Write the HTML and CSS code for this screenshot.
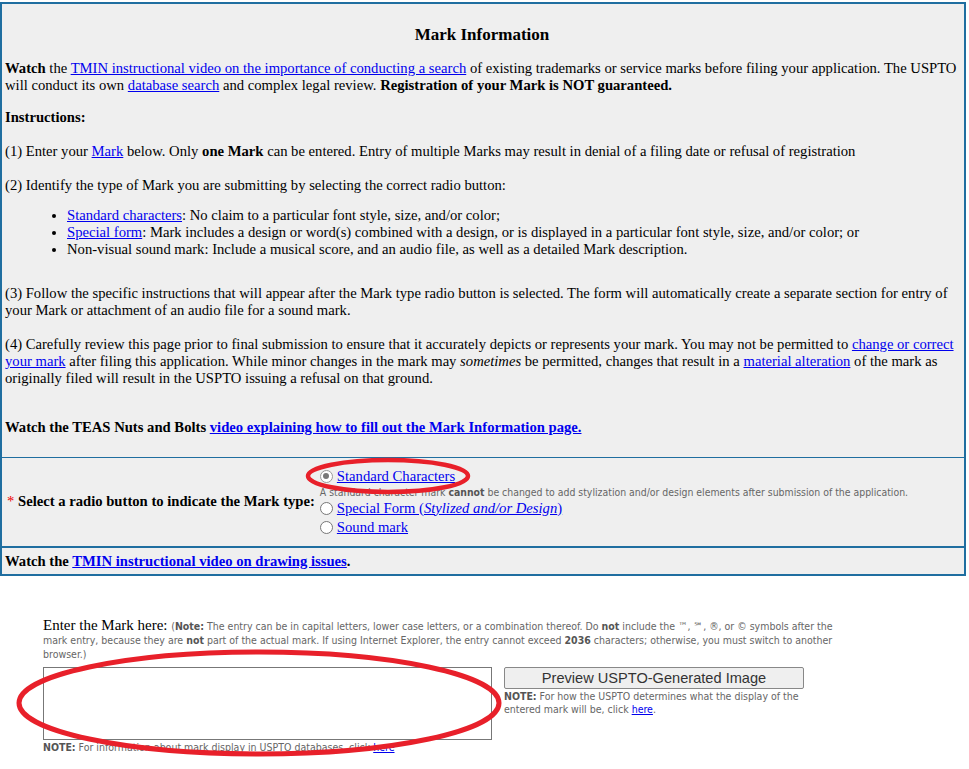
FILE: index.html
```html
<!DOCTYPE html>
<html>
<head>
<meta charset="utf-8">
<link rel="stylesheet" href="styles.css">
</head>
<body>
<div class="box">
  <div class="info">
    <h2 class="title">Mark Information</h2>
    <p class="lead"><b>Watch</b> the <a href="#">TMIN instructional video on the importance of conducting a search</a> of existing trademarks or service marks before filing your application. The USPTO will conduct its own <a href="#">database search</a> and complex legal review. <b>Registration of your Mark is NOT guaranteed.</b></p>
    <p><b>Instructions:</b></p>
    <p>(1) Enter your <a href="#">Mark</a> below. Only <b>one Mark</b> can be entered. Entry of multiple Marks may result in denial of a filing date or refusal of registration</p>
    <p>(2) Identify the type of Mark you are submitting by selecting the correct radio button:</p>
    <ul class="types">
      <li><a href="#">Standard characters</a>: No claim to a particular font style, size, and/or color;</li>
      <li><a href="#">Special form</a>: Mark includes a design or word(s) combined with a design, or is displayed in a particular font style, size, and/or color; or</li>
      <li>Non-visual sound mark: Include a musical score, and an audio file, as well as a detailed Mark description.</li>
    </ul>
    <p>(3) Follow the specific instructions that will appear after the Mark type radio button is selected. The form will automatically create a separate section for entry of your Mark or attachment of an audio file for a sound mark.</p>
    <p>(4) Carefully review this page prior to final submission to ensure that it accurately depicts or represents your mark. You may not be permitted to <a href="#">change or correct your mark</a> after filing this application. While minor changes in the mark may <i>sometimes</i> be permitted, changes that result in a <a href="#">material alteration</a> of the mark as originally filed will result in the USPTO issuing a refusal on that ground.</p>
    <p class="teas"><b>Watch the TEAS Nuts and Bolts <a href="#">video explaining how to fill out the Mark Information page.</a></b></p>
  </div>
  <div class="select">
    <div class="select-label"><span class="req">*</span> <b>Select a radio button to indicate the Mark type:</b></div>
    <div class="options">
      <label class="opt"><span class="radio checked"></span><a href="#">Standard Characters</a></label>
      <div class="hint">A standard character mark <b>cannot</b> be changed to add stylization and/or design elements after submission of the application.</div>
      <label class="opt opt-special"><span class="radio"></span><a href="#">Special Form (<i>Stylized and/or Design</i>)</a></label>
      <label class="opt"><span class="radio"></span><a href="#">Sound mark</a></label>
    </div>
  </div>
  <div class="drawing"><b>Watch the <a href="#">TMIN instructional video on drawing issues</a>.</b></div>
</div>

<div class="entry">
  <div class="entry-head"><span class="entry-label">Enter the Mark here:</span> <span class="small">(<b>Note:</b> The entry can be in capital letters, lower case letters, or a combination thereof. Do <b>not</b> include the ™, ℠, ®, or © symbols after the mark entry, because they are <b>not</b> part of the actual mark. If using Internet Explorer, the entry cannot exceed <b>2036</b> characters; otherwise, you must switch to another browser.)</span></div>
  <div class="entry-row">
    <div class="markbox"></div>
    <div class="preview">
      <button class="btn">Preview USPTO-Generated Image</button>
      <div class="small">
        <b>NOTE:</b> For how the USPTO determines what the display of the entered mark will be, click <a href="#">here</a>.
      </div>
    </div>
  </div>
  <div class="small foot"><b>NOTE:</b> For information about mark display in USPTO databases, click <a href="#">here</a></div>
</div>

<svg class="ring ring1" width="166" height="40" viewBox="0 0 166 40"><ellipse cx="83" cy="20" rx="80" ry="16" fill="none" stroke="#e8202a" stroke-width="4.5"/></svg>
<svg class="ring ring2" width="490" height="112" viewBox="0 0 490 112"><ellipse cx="245" cy="56" rx="240" ry="51" fill="none" stroke="#e8202a" stroke-width="5"/></svg>
</body>
</html>
```

FILE: styles.css
```css
html, body { margin: 0; padding: 0; background: #fff; }
body {
  font-family: "Liberation Serif", "Times New Roman", serif;
  font-size: 14.65px;
  line-height: 17px;
  color: #000;
  position: relative;
  width: 969px;
  height: 769px;
  overflow: hidden;
}
a { color: #0000ee; text-decoration: underline; }
p { margin: 0 0 17px; }

.box {
  margin-top: 2px;
  width: 962px;
  border: 2px solid #1f6ea0;
  background: #efefef;
}
.info {
  padding: 17px 5px 21px 3px;
}
.title {
  font-size: 17px;
  font-weight: bold;
  text-align: center;
  margin: 4px 0 15px;
  line-height: 20px;
}
.lead { margin-bottom: 15px; }
.types {
  margin: -4px 0 27px;
  padding-left: 62px;
}
.types li { line-height: 17px; }
.teas { margin: 32px 0 0; }

.select {
  border-top: 1px solid #1f6ea0;
  display: flex;
  align-items: center;
  padding: 9px 0 10px 5px;
}
.select-label { padding-right: 5px; }
.req { color: #e00; }
.options { display: flex; flex-direction: column; }
.opt { display: flex; align-items: center; height: 18px; }
.opt-special { margin-bottom: 1px; }
.radio {
  width: 13px; height: 13px;
  border: 1px solid #777;
  border-radius: 50%;
  background: #fff;
  margin-right: 4px;
  box-sizing: border-box;
  position: relative;
  flex: none;
}
.radio.checked { border-color: #999; }
.radio.checked::after {
  content: ""; position: absolute; left: 2.5px; top: 2.5px;
  width: 6px; height: 6px; border-radius: 50%; background: #777;
}
.hint {
  font-family: "DejaVu Sans Condensed", "DejaVu Sans", Verdana, sans-serif;
  font-stretch: condensed;
  font-size: 10.4px;
  color: #666;
  line-height: 14px;
  white-space: nowrap;
}
.hint b { color: #555; }

.drawing {
  border-top: 2px solid #1f6ea0;
  padding: 5px 5px 4px 3px;
}

.entry {
  margin: 43px 0 0 43px;
  width: 790px;
}
.entry-label { font-size: 15px; }
.small {
  font-family: "DejaVu Sans Condensed", "DejaVu Sans", Verdana, sans-serif;
  font-stretch: condensed;
  font-size: 10.5px;
  line-height: 13px;
  color: #666;
}
.small b { color: #555; }
.entry-head { line-height: 13px; }
.entry-row { display: flex; margin-top: 6px; gap: 12px; }
.markbox {
  width: 447px; height: 71px;
  border: 1px solid #777;
  background: #fff;
}
.preview { width: 300px; }
.btn {
  display: block;
  width: 300px;
  height: 22px;
  font-family: "Liberation Sans", Arial, sans-serif;
  font-size: 14.6px;
  color: #333;
  background: #efefef;
  border: 1px solid #888;
  border-radius: 2px;
  padding: 0;
  margin-bottom: 1px;
}
.foot { margin-top: 1px; }

.ring { position: absolute; }
.ring1 { left: 305px; top: 456px; }
.ring2 { left: 14px; top: 647px; }
```
